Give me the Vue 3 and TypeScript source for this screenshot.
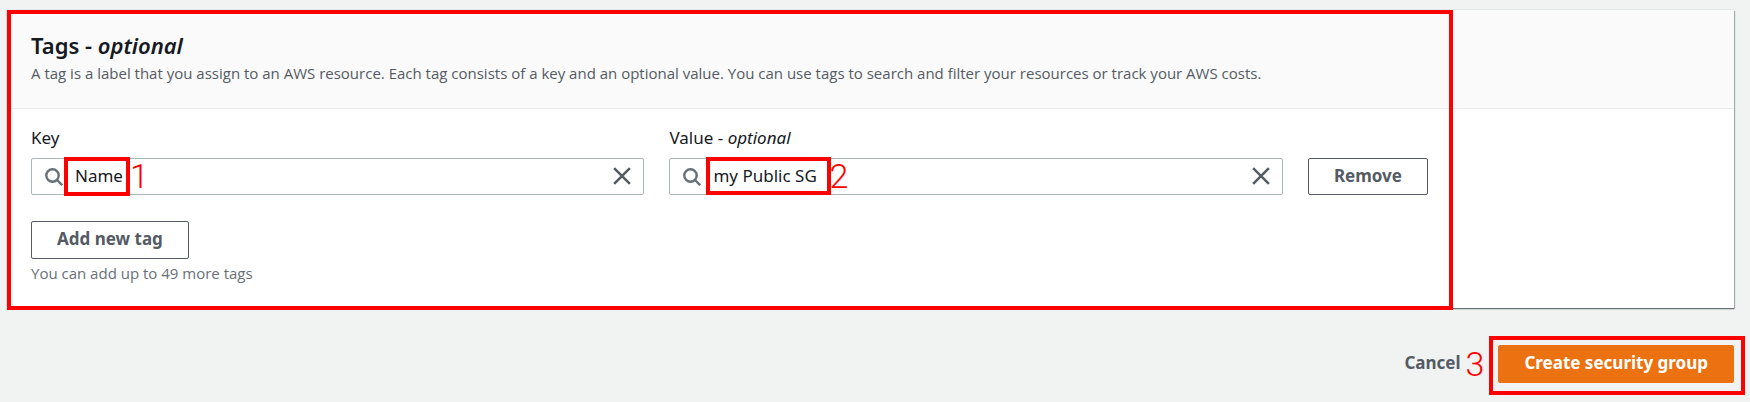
<script setup lang="ts">
import { ref } from 'vue'

interface Field {
  id: string
  label: string
  hint: string
  value: string
  step: string
}

const fields = ref<Field[]>([
  { id: 'tag-key', label: 'Key', hint: '', value: 'Name', step: '1' },
  { id: 'tag-value', label: 'Value - ', hint: 'optional', value: 'my Public SG', step: '2' },
])
</script>

<template>
  <main class="page">
    <section class="panel">
      <header class="panel-header">
        <h2>Tags - <em>optional</em></h2>
        <p>A tag is a label that you assign to an AWS resource. Each tag consists of a key and an optional value. You can use tags to search and filter your resources or track your AWS costs.</p>
      </header>
      <div class="panel-body">
        <div class="tag-row">
          <div v-for="field in fields" :key="field.id" class="field">
            <label :for="field.id">{{ field.label }}<em v-if="field.hint">{{ field.hint }}</em></label>
            <div class="control">
              <svg class="search" viewBox="0 0 18 18" aria-hidden="true">
                <circle cx="7.5" cy="7.5" r="6.2" />
                <path d="M12 12l5.2 5.2" />
              </svg>
              <input :id="field.id" v-model="field.value" type="text" autocomplete="off" />
              <button class="clear" type="button" aria-label="Clear" @click="field.value = ''">
                <svg viewBox="0 0 16 16" aria-hidden="true"><path d="M1 1l14 14M15 1L1 15" /></svg>
              </button>
              <span class="mark" :class="field.id"></span>
              <span class="step" :class="field.id">{{ field.step }}</span>
            </div>
          </div>
          <button class="btn remove" type="button">Remove</button>
        </div>
        <button class="btn add" type="button">Add new tag</button>
        <p class="note">You can add up to 49 more tags</p>
      </div>
      <span class="mark section-mark"></span>
    </section>
    <footer class="actions">
      <a class="cancel" href="#">Cancel</a>
      <span class="step-inline">3</span>
      <div class="submit">
        <button class="btn primary" type="button">Create security group</button>
        <span class="mark submit-mark"></span>
      </div>
    </footer>
  </main>
</template>

<style>
body {
  margin: 0;
  background: #f1f3f3;
}
</style>

<style scoped>
* {
  box-sizing: border-box;
}
.page {
  min-height: 100vh;
  padding: 10px 16px 16px 7px;
  background: #f1f3f3;
  color: #16191f;
  font-family: "Noto Sans", sans-serif;
  font-size: 17px;
  line-height: 24px;
}
.panel {
  position: relative;
  background: #fff;
  box-shadow: 0 1px 1px #687078, 1px 1px 1px #aab7b8, 0 -1px 0 #e6e9e9;
}
.panel-header {
  padding: 23px 24px;
  border-bottom: 1px solid #eaeded;
  background: #fafafa;
}
h2 {
  margin: 0;
  font-size: 22px;
  font-weight: 600;
  line-height: 24px;
}
.panel-header p {
  margin: 4px 0 0;
  color: #545b64;
  font-family: "Open Sans", sans-serif;
  font-size: 15px;
  line-height: 24px;
}
.panel-body {
  padding: 17px 24px 24px;
}
.tag-row {
  display: flex;
  align-items: flex-end;
  gap: 25px;
  width: 83.2%;
}
.field {
  flex: 1;
  min-width: 0;
}
label {
  display: block;
  margin-bottom: 8px;
}
.control {
  position: relative;
  display: flex;
}
input {
  width: 100%;
  height: 37px;
  padding: 0 44px 2px 43px;
  border: 1px solid #aab7b8;
  border-radius: 2px;
  background: #fff;
  color: #16191f;
  font: inherit;
}
.search {
  position: absolute;
  top: 10px;
  left: 14px;
  width: 18px;
  height: 18px;
  fill: none;
  stroke: #687078;
  stroke-width: 2.4;
}
.clear {
  position: absolute;
  top: 6px;
  right: 10px;
  display: grid;
  place-items: center;
  width: 24px;
  height: 24px;
  padding: 0;
  border: 0;
  background: none;
}
.clear svg {
  width: 18px;
  height: 18px;
  fill: none;
  stroke: #545b64;
  stroke-width: 2.2;
}
.btn {
  height: 38px;
  padding: 0 25px 2px;
  border: 1px solid #545b64;
  border-radius: 2px;
  background: #fff;
  color: #545b64;
  font: inherit;
  font-weight: 700;
  white-space: nowrap;
}
.remove {
  width: 120px;
  height: 37px;
}
.add {
  display: block;
  margin-top: 26px;
}
.note {
  margin: 3px 0 0;
  color: #687078;
  font-family: "Open Sans", sans-serif;
  font-size: 15px;
  line-height: 22px;
}
.actions {
  display: flex;
  align-items: center;
  justify-content: flex-end;
  margin-top: 37px;
}
.cancel {
  padding-bottom: 2px;
  color: #545b64;
  font-weight: 700;
  text-decoration: none;
}
.btn.primary {
  border-color: #ec7211;
  background: #ec7211;
  color: #fff;
}
.submit {
  position: relative;
  display: flex;
}
.mark {
  position: absolute;
  border: 4px solid #f00;
  pointer-events: none;
}
.mark.tag-key {
  top: -1px;
  left: 33px;
  width: 66px;
  height: 39px;
}
.mark.tag-value {
  top: -1px;
  left: 37px;
  width: 125px;
  height: 38px;
}
.section-mark {
  top: 0;
  bottom: -2px;
  left: 0;
  width: 83.75%;
}
.submit-mark {
  inset: -9px -11px -12px -9px;
}
.step,
.step-inline {
  color: #f00;
  font-family: Roboto, sans-serif;
  font-size: 34px;
  font-weight: 300;
  line-height: 36px;
}
.step {
  position: absolute;
  top: 0;
}
.step.tag-key {
  left: 99px;
}
.step.tag-value {
  left: 160px;
}
.step-inline {
  margin: 0 14px 0 5px;
}
</style>
